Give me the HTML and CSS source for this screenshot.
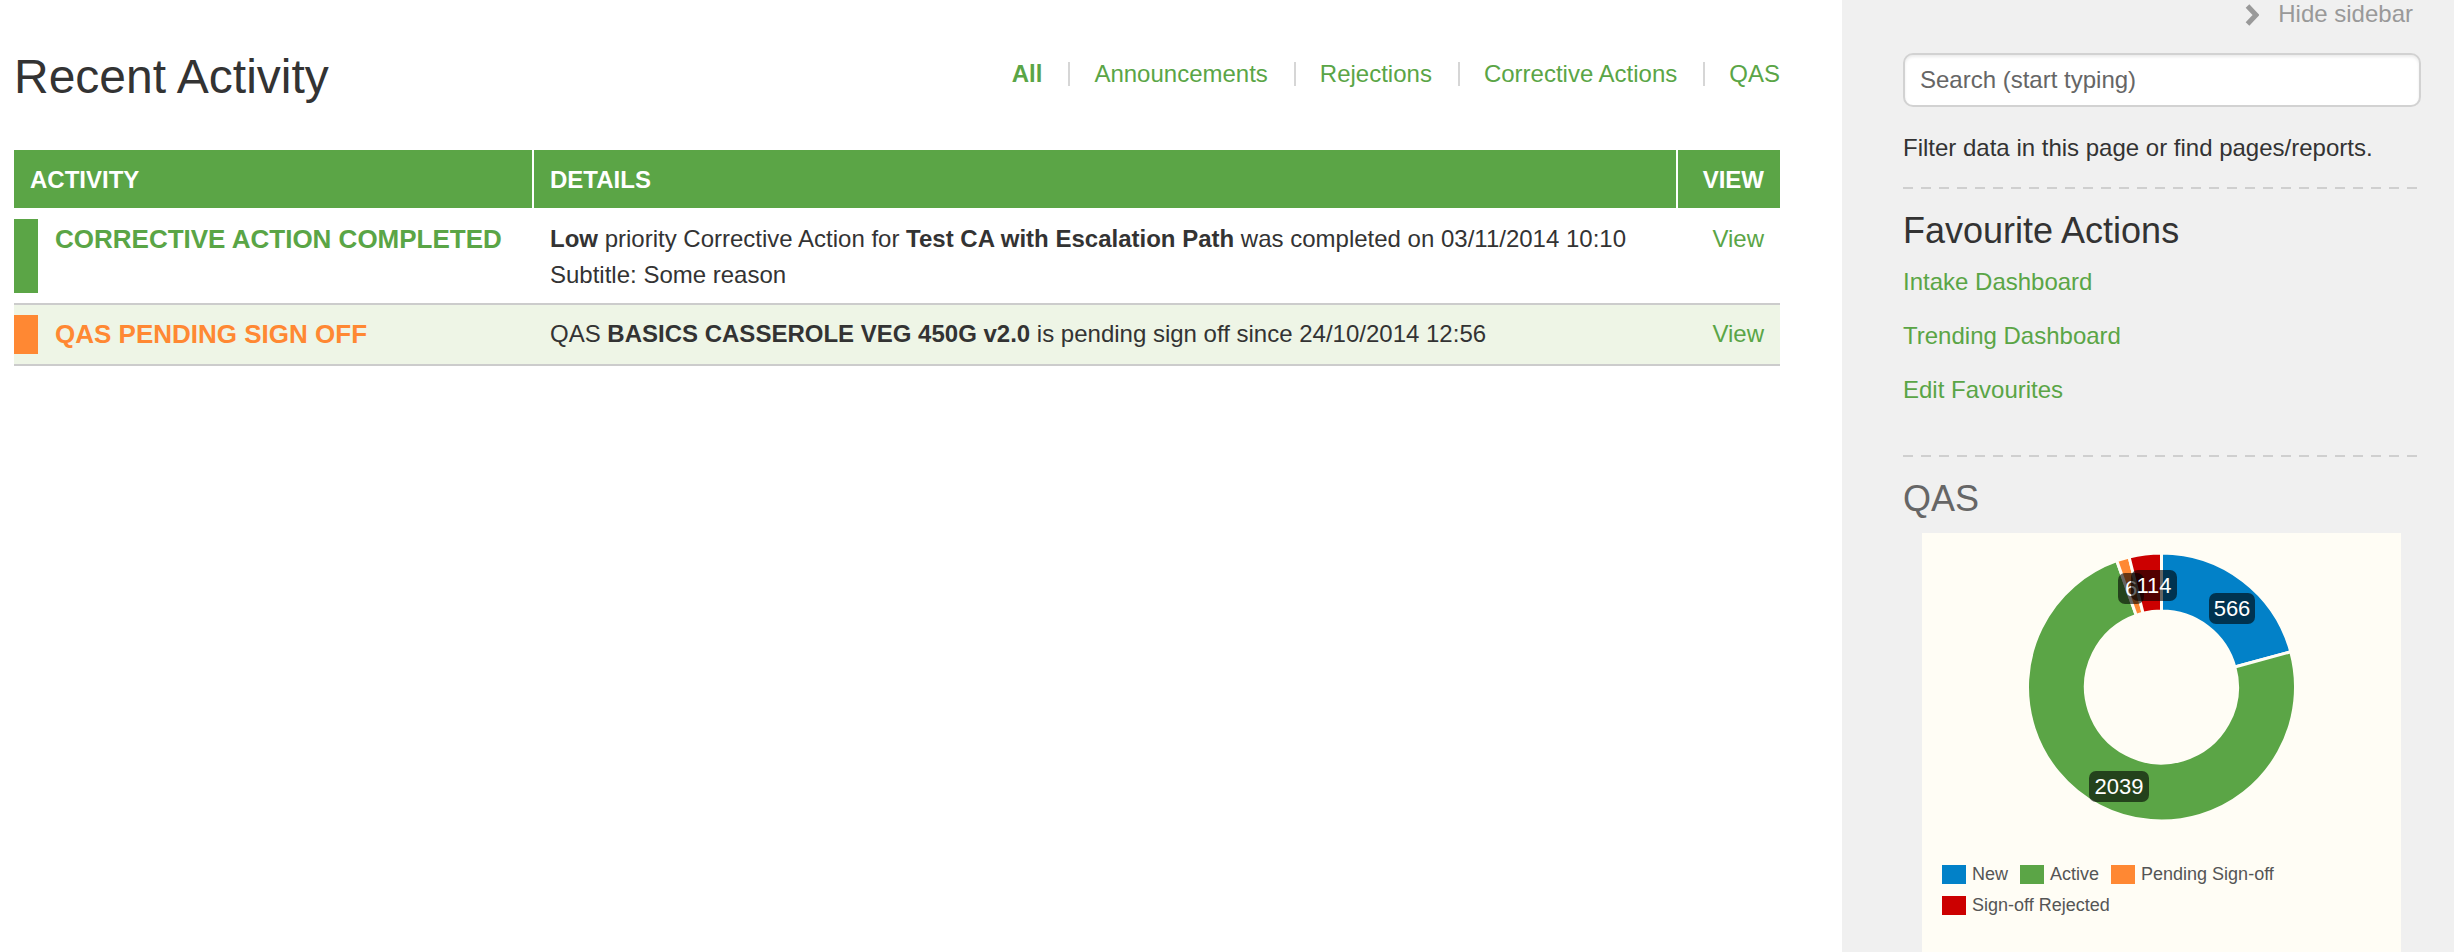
FILE: index.html
```html
<!DOCTYPE html>
<html>
<head>
<meta charset="utf-8">
<link rel="stylesheet" href="styles.css">
</head>
<body>
<div class="main">
  <div class="page-header">
    <h1 class="title">Recent Activity</h1>
    <nav class="filters">
      <a class="filter active">All</a><span class="sep"></span>
      <a class="filter">Announcements</a><span class="sep"></span>
      <a class="filter">Rejections</a><span class="sep"></span>
      <a class="filter">Corrective Actions</a><span class="sep"></span>
      <a class="filter">QAS</a>
    </nav>
  </div>
  <div class="grid-table">
    <div class="row head">
      <div class="th">ACTIVITY</div>
      <div class="th">DETAILS</div>
      <div class="th th-view">VIEW</div>
    </div>
    <div class="row body">
      <div class="activity ca">CORRECTIVE ACTION COMPLETED</div>
      <div class="details"><b>Low</b> priority Corrective Action for <b>Test CA with Escalation Path</b> was completed on 03/11/2014 10:10<br>Subtitle: Some reason</div>
      <div class="view"><a>View</a></div>
    </div>
    <div class="row body alt">
      <div class="activity qas">QAS PENDING SIGN OFF</div>
      <div class="details">QAS <b>BASICS CASSEROLE VEG 450G v2.0</b> is pending sign off since 24/10/2014 12:56</div>
      <div class="view"><a>View</a></div>
    </div>
  </div>
</div>
<aside class="sidebar">
  <div class="hide">
    <svg class="chev" width="14" height="22" viewBox="0 0 14 22"><path d="M2.5 2 L11 11 L2.5 20" fill="none" stroke="#999" stroke-width="5"/></svg>
    <span>Hide sidebar</span>
  </div>
  <input class="search" type="text" placeholder="Search (start typing)">
  <p class="help">Filter data in this page or find pages/reports.</p>
  <div class="divider"></div>
  <h2 class="side-title">Favourite Actions</h2>
  <div class="fav-links">
    <a>Intake Dashboard</a>
    <a>Trending Dashboard</a>
    <a>Edit Favourites</a>
  </div>
  <div class="divider"></div>
  <h2 class="side-title qas-title">QAS</h2>
  <div class="chart">
    <svg class="donut" width="439" height="270" viewBox="0 0 439 270">
      <g stroke="#fffdf5" stroke-width="3" stroke-linejoin="round">
        <path fill="#0281c8" d="M219.5 0 A134 134 0 0 1 348.8 98.8 L292.8 114 A76 76 0 0 0 219.5 58 Z"/>
        <path fill="#5ba546" d="M348.8 98.8 A134 134 0 1 1 174.8 7.7 L194.2 62.3 A76 76 0 1 0 292.8 114 Z"/>
        <path fill="#ff8833" d="M174.8 7.7 A134 134 0 0 1 187.1 4.0 L201.1 60.3 A76 76 0 0 0 194.2 62.3 Z"/>
        <path fill="#cc0000" d="M187.1 4.0 A134 134 0 0 1 219.5 0 L219.5 58 A76 76 0 0 0 201.1 60.3 Z"/>
      </g>
      <g class="labels">
        <rect x="267" y="40" width="46" height="31" rx="7" fill="rgba(0,0,0,0.6)"/>
        <text x="290" y="63">566</text>
        <rect x="147" y="218" width="60" height="31" rx="7" fill="rgba(0,0,0,0.6)"/>
        <text x="177" y="241">2039</text>
        <rect x="176" y="20" width="26" height="31" rx="7" fill="rgba(0,0,0,0.6)"/>
        <text x="189" y="43">6</text>
        <rect x="189" y="17" width="46" height="31" rx="7" fill="rgba(0,0,0,0.6)"/>
        <text x="212" y="40">114</text>
      </g>
    </svg>
    <div class="legend">
      <span class="item"><span class="sw new"></span>New</span>
      <span class="item"><span class="sw active"></span>Active</span>
      <span class="item"><span class="sw pending"></span>Pending Sign-off</span>
      <span class="item"><span class="sw rejected"></span>Sign-off Rejected</span>
    </div>
  </div>
</aside>
</body>
</html>
```
FILE: styles.css
```css
html, body {
  margin: 0;
  padding: 0;
}
body {
  display: flex;
  min-height: 952px;
  font-family: "Liberation Sans", Arial, sans-serif;
  font-size: 24px;
  color: #333;
  background: #fff;
}
a {
  color: #5aa546;
  text-decoration: none;
}
.main {
  flex: 1;
  padding: 0 62px 0 14px;
}
.page-header {
  display: flex;
  justify-content: space-between;
  align-items: flex-start;
  padding-top: 50px;
  margin-bottom: 47px;
}
.title {
  margin: 0;
  font-size: 48px;
  line-height: 53px;
  font-weight: normal;
  color: #333;
}
.filters {
  display: flex;
  align-items: center;
  margin-top: 6px;
  line-height: 36px;
}
.filter {
  color: #5aa546;
}
.filter.active {
  font-weight: bold;
}
.sep {
  width: 2px;
  height: 24px;
  background: #d6d6d6;
  margin: 0 24px 0 26px;
}
.grid-table {
  width: 100%;
}
.row {
  display: grid;
  grid-template-columns: 518px 1fr 104px;
}
.head {
  background: #5ba546;
  color: #fff;
  font-weight: bold;
  height: 58px;
}
.th {
  padding: 12px 16px 10px;
  line-height: 36px;
}
.th + .th {
  border-left: 2px solid #fff;
}
.th-view {
  text-align: right;
}
.body {
  padding: 11px 0 10px;
  border-bottom: 2px solid #ccc;
}
.body.alt {
  background: #eef5e6;
  padding-top: 10px;
}
.activity {
  border-left: 24px solid #5ba546;
  padding-left: 17px;
  font-size: 26px;
  font-weight: bold;
  line-height: 40px;
}
.activity.ca {
  color: #5aa546;
}
.activity.qas {
  color: #ff8833;
  border-left-color: #ff8833;
  line-height: 39px;
}
.details {
  border-left: 2px solid transparent;
  padding: 2px 16px 0;
  line-height: 36px;
}
.view {
  border-left: 2px solid transparent;
  padding: 2px 16px 0;
  line-height: 36px;
  text-align: right;
}
.alt .details, .alt .view {
  padding-top: 1px;
}
.sidebar {
  width: 612px;
  box-sizing: border-box;
  padding: 0 33px 0 61px;
  background: #f0f0f0;
  flex: none;
}
.hide {
  display: flex;
  justify-content: flex-end;
  align-items: center;
  height: 28px;
  line-height: 28px;
  padding-right: 8px;
  color: #999;
  gap: 19px;
}
.chev {
  display: block;
  margin-top: 2px;
}
.search {
  display: block;
  margin-top: 25px;
  width: 100%;
  height: 54px;
  box-sizing: border-box;
  border: 2px solid #d2d2d2;
  border-radius: 10px;
  box-shadow: inset 0 2px 3px rgba(0,0,0,0.08);
  background: #fff;
  padding: 0 15px;
  font-family: "Liberation Sans", Arial, sans-serif;
  font-size: 24px;
  color: #555;
  outline: none;
}
.search::placeholder {
  color: #666;
}
.help {
  margin: 23px 0 0;
  line-height: 36px;
}
.divider {
  height: 2px;
  margin-top: 21px;
  background: repeating-linear-gradient(to right, #cfcfcf 0 10px, transparent 10px 18px);
}
.side-title {
  margin: 22px 0 0;
  font-size: 36px;
  line-height: 40px;
  font-weight: normal;
  color: #333;
}
.qas-title {
  color: #666;
}
.fav-links {
  margin-top: 13px;
}
.fav-links a {
  display: block;
  line-height: 36px;
  margin-bottom: 18px;
}
.fav-links + .divider {
  margin-top: 47px;
}
.chart {
  margin: 14px 20px 0 19px;
  padding: 20px 20px 60px;
  background: #fffdf5;
}
.donut {
  display: block;
}
.labels text {
  fill: #fff;
  font-family: "Liberation Sans", Arial, sans-serif;
  font-size: 22px;
  text-anchor: middle;
}
.legend {
  margin-top: 36px;
  display: flex;
  flex-wrap: wrap;
  font-size: 18px;
  color: #555;
}
.item {
  display: flex;
  align-items: center;
  height: 31px;
  margin-right: 12px;
}
.sw {
  width: 24px;
  height: 19px;
  margin-right: 6px;
}
.sw.new { background: #0281c8; }
.sw.active { background: #5ba546; }
.sw.pending { background: #ff8833; }
.sw.rejected { background: #cc0000; }
```
